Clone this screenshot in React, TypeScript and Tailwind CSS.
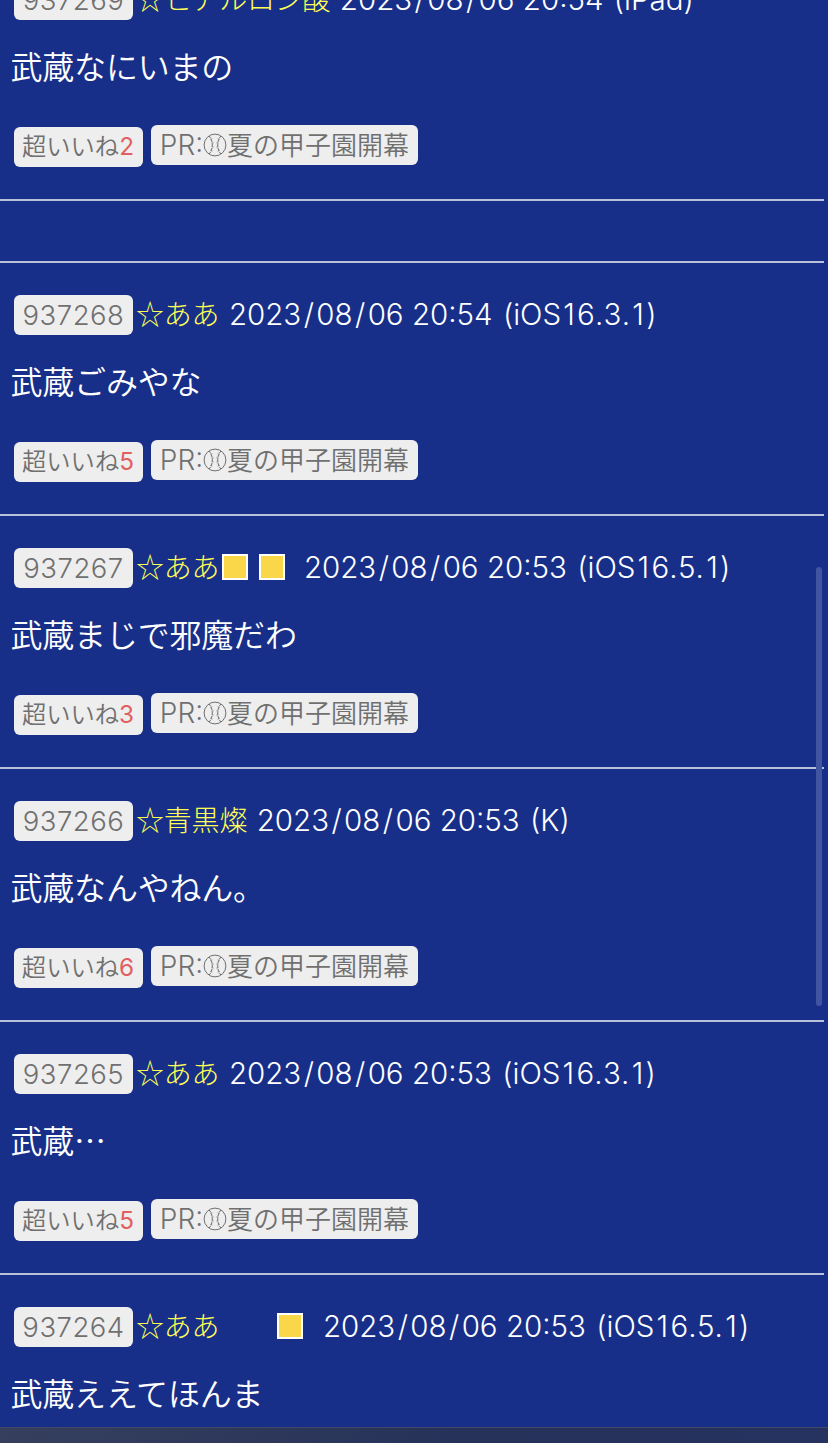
type Post = {
  id: number
  name: string
  squares?: number
  wideGap?: boolean
  date: string
  device: string
  body: string
  likes: number
}

const latest: Post = { id: 937269, name: "ヒアルロン酸", date: "2023/08/06 20:54", device: "iPad", body: "武蔵なにいまの", likes: 2 }

const posts: Post[] = [
  { id: 937268, name: "ああ", date: "2023/08/06 20:54", device: "iOS16.3.1", body: "武蔵ごみやな", likes: 5 },
  { id: 937267, name: "ああ", squares: 2, date: "2023/08/06 20:53", device: "iOS16.5.1", body: "武蔵まじで邪魔だわ", likes: 3 },
  { id: 937266, name: "青黒燦", date: "2023/08/06 20:53", device: "K", body: "武蔵なんやねん。", likes: 6 },
  { id: 937265, name: "ああ", date: "2023/08/06 20:53", device: "iOS16.3.1", body: "武蔵…", likes: 5 },
  { id: 937264, name: "ああ", squares: 1, wideGap: true, date: "2023/08/06 20:53", device: "iOS16.5.1", body: "武蔵ええてほんま", likes: 4 },
]

const air: Record<string, string> = {
  "/": "mx-[2.4px]",
  "(": "ml-0.5",
  "1": "mx-[2.2px]",
  ".": "mx-[0.2px]",
}

function Baseball() {
  return (
    <svg viewBox="0 0 24 24" className="size-6 shrink-0" fill="none" stroke="currentColor" strokeWidth="1">
      <circle cx="12" cy="12" r="10.9" />
      <path d="M6.2 3c4.2 5 4.2 13 0 18M17.8 3c-4.2 5-4.2 13 0 18" strokeDasharray="3 1.2" />
      <path d="M7.2 6.8l2.2-1M8.5 10.3l2.2-.4M8.5 13.7l2.2.4M7.2 17.2l2.2 1M16.8 6.8l-2.2-1M15.5 10.3l-2.2-.4M15.5 13.7l-2.2.4M16.8 17.2l-2.2 1" strokeWidth=".7" />
    </svg>
  )
}

function Squares({ count, wideGap }: { count: number; wideGap?: boolean }) {
  return (
    <span className={wideGap ? "ml-[58px] mr-[10px] -mt-0.5 flex gap-[11px]" : "ml-[2.5px] mr-[9.5px] -mt-0.5 flex gap-[11px]"}>
      {Array.from({ length: count }, (_, i) => (
        <span key={i} className="size-[26px] border-2 border-white bg-[#fad749]" />
      ))}
    </span>
  )
}

function Stamp({ text }: { text: string }) {
  return text.split(/([/(1.])/).map((part, i) =>
    air[part] ? <span key={i} className={air[part]}>{part}</span> : part
  )
}

function PostItem({ post }: { post: Post }) {
  return (
    <article className="h-[253px] w-[824px] shrink-0 border-t-2 border-[#b9c0d9] pt-8">
      <div className="flex h-10 items-center pl-[14px] whitespace-nowrap">
        <span className="flex h-10 w-[119px] items-center justify-center rounded-md bg-[#eeeeee] pt-0.5 text-[27.5px] tracking-[0.5px] text-[#707070]">
          {post.id}
        </span>
        <span className="-mt-1 ml-[3px] flex h-10 items-center font-['Noto_Sans_CJK_JP',sans-serif] text-[28px] leading-10 tracking-[-0.2px] text-[#ffff54]">
          ☆{post.name}
        </span>
        {post.squares && <Squares count={post.squares} wideGap={post.wideGap} />}
        <span className="-mt-0.5 ml-[9.5px] text-[29.5px] leading-10">
          <Stamp text={`${post.date} (${post.device})`} />
        </span>
      </div>
      <p className="mt-[21px] pl-[10.5px] font-['Noto_Sans_CJK_JP',sans-serif] text-[32px] leading-[48px] font-[350] tracking-[-0.2px]">
        {post.body}
      </p>
      <div className="mt-9 flex items-start pl-[14px] whitespace-nowrap text-[#707070]">
        <span className="mt-0.5 flex h-10 w-[129px] items-center justify-center rounded-md bg-[#eeeeee] pr-px pb-0.5 text-[24.3px] font-[350]">
          超いいね<span className="font-normal text-[#e06060]">{post.likes}</span>
        </span>
        <span className="ml-2 flex h-10 w-[267px] items-center justify-center rounded-md bg-[#eeeeee] text-[26px] font-[350]">
          <span className="text-[28px] font-light">PR:</span>
          <Baseball />夏の甲子園開幕
        </span>
      </div>
    </article>
  )
}

export default function App() {
  return (
    <div className="relative flex h-[1443px] w-[828px] flex-col overflow-hidden bg-[#182f8a] font-['Inter','Noto_Sans_CJK_JP',sans-serif] font-light text-white">
      <main className="-mt-[54px] flex min-h-0 flex-1 flex-col overflow-hidden">
        <PostItem post={latest} />
        <div className="h-[62px] w-[824px] shrink-0 border-t-2 border-[#b9c0d9]" />
        {posts.map(post => (
          <PostItem key={post.id} post={post} />
        ))}
      </main>
      <footer className="h-4 shrink-0 border-t border-[#414868] bg-linear-to-r from-[#363f5d] via-[#263259] via-55% to-[#263260]" />
      <div className="absolute top-[567px] right-[6px] h-[439px] w-[6px] rounded-full bg-[#4054a0]" />
    </div>
  )
}
